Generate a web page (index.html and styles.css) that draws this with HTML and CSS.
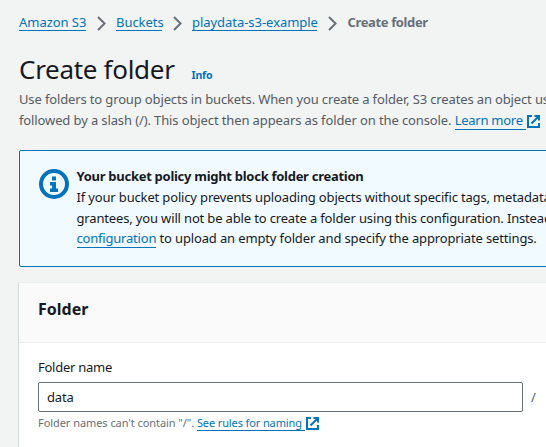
FILE: index.html
```html
<!DOCTYPE html>
<html lang="en">
<head>
<meta charset="utf-8">
<title>Create folder</title>
<link rel="stylesheet" href="styles.css">
</head>
<body>
<svg class="defs" width="0" height="0" aria-hidden="true">
  <symbol id="external" viewBox="0 0 13 13"><path d="M5 1H1V12H12V8M7.5 1H12V5.5M12 1L4.5 8.5" fill="none" stroke="currentColor" stroke-width="2"/></symbol>
  <symbol id="chevron" viewBox="0 0 9 15"><path d="M1 1L7.6 7.5L1 14" fill="none" stroke="currentColor" stroke-width="2"/></symbol>
</svg>
<main class="page">
  <nav class="crumbs">
    <a class="link c1">Amazon S3</a><svg class="chevron"><use href="#chevron"/></svg>
    <a class="link c2">Buckets</a><svg class="chevron"><use href="#chevron"/></svg>
    <a class="link c3">playdata-s3-example</a><svg class="chevron"><use href="#chevron"/></svg>
    <span class="current">Create folder</span>
  </nav>
  <header class="heading"><h1>Create folder</h1><a class="info">Info</a></header>
  <div class="intro">
    <p class="i1">Use folders to group objects in buckets. When you create a folder, S3 creates an object us</p>
    <p class="i2">followed by a slash (/). This object then appears as folder on the console. <a class="link learn">Learn more&nbsp;</a><svg class="external"><use href="#external"/></svg></p>
  </div>
  <section class="alert">
    <svg class="info-icon" viewBox="0 0 30 30"><circle cx="15" cy="15" r="13" fill="none" stroke="currentColor" stroke-width="4"/><path d="M13 7.500h4v4h-4zM11 13h6v6.500h2v3.500h-8v-3.500h2v-3h-2z" fill="currentColor"/></svg>
    <div class="alert-text">
      <h2>Your bucket policy might block folder creation</h2>
      <p class="a1">If your bucket policy prevents uploading objects without specific tags, metadata</p>
      <p class="a2">grantees, you will not be able to create a folder using this configuration. Instead</p>
      <p class="a3"><a class="link">configuration</a> to upload an empty folder and specify the appropriate settings.</p>
    </div>
  </section>
  <section class="card">
    <h2 class="card-head">Folder</h2>
    <div class="card-body">
      <label for="name">Folder name</label>
      <div class="field"><input id="name" value="data"><span class="slash">/</span></div>
      <p class="hint">Folder names can't contain "/". <a class="link rules">See rules for naming&nbsp;</a><svg class="external"><use href="#external"/></svg></p>
    </div>
  </section>
</main>
</body>
</html>
```
FILE: styles.css
```css
* { box-sizing: border-box; }
body { margin: 0; height: 447px; overflow: hidden; background: #f2f3f3; color: #16191f; font: 13px/21px "Noto Sans", sans-serif; }
h1, h2, p { margin: 0; }
p, h2 { white-space: nowrap; }
.defs { display: block; }
.page { display: flex; flex-direction: column; height: 447px; padding: 12px 0 0 19px; overflow: hidden; }
.link { color: #0073bb; border-bottom: 1px solid #0073bb; }
.crumbs { display: flex; height: 20px; white-space: nowrap; flex: none; }
.crumbs .link { height: 19px; line-height: 21px; flex: none; letter-spacing: -0.04px; }
.c1 { width: 67px; }
.c2 { width: 46px; }
.c3 { width: 125px; }
.chevron { width: 9px; height: 15px; margin: 4px 10px 0 11px; color: #687078; flex: none; }
.current { margin-left: 0.6px; color: #687078; font-weight: 700; line-height: 21px; letter-spacing: -0.38px; }
.heading { display: flex; align-items: baseline; margin-top: 19px; height: 38px; flex: none; }
h1 { font-size: 26px; font-weight: 400; line-height: 36px; letter-spacing: -0.3px; }
.info { color: #0073bb; font-size: 10.5px; font-weight: 700; margin-left: 17px; letter-spacing: -0.2px; }
.intro { color: #545b64; flex: none; }
.i1 { letter-spacing: -0.138px; }
.i2 { letter-spacing: -0.118px; }
.learn { letter-spacing: -0.26px; }
.intro .link, .alert .link { display: inline-block; line-height: 17px; }
.external { width: 13px; height: 13px; margin-left: 1px; vertical-align: -3px; color: #0073bb; }
.alert { display: flex; flex: none; height: 117px; margin: 19px -4px 0 0; padding: 15px 0 0 18px; border: 1px solid #0073bb; border-radius: 2px; background: #f1faff; }
.info-icon { width: 30px; height: 30px; margin: 3px 7.500px 0 1px; color: #0073bb; flex: none; }
.alert-text h2 { font-size: 13px; line-height: 21px; letter-spacing: -0.28px; }
.alert-text p { line-height: 20.6px; }
.a1 { letter-spacing: -0.155px; }
.a2 { letter-spacing: -0.155px; }
.a3 { letter-spacing: -0.14px; }
.a3 .link { letter-spacing: -0.2px; }
.card { flex: 1; margin: 15px -4px 0 -1px; border: 1px solid #eaeded; border-left-color: #d5dbdb; border-bottom: 0; background: #fff; }
.card-head { height: 60px; padding: 15px 19px; border-bottom: 1px solid #eaeded; background: #fafafa; font-size: 16px; line-height: 23px; }
.card-body { padding: 14px 0 0 19px; }
label { display: block; line-height: 21px; letter-spacing: -0.25px; }
.field { display: flex; align-items: center; margin-top: 4px; }
input { flex: none; width: 485px; height: 30px; padding: 0 8px; border: 1px solid #687078; border-radius: 2px; color: #16191f; font: inherit; letter-spacing: -0.2px; outline: 0; }
.slash { margin-left: 8px; color: #545b64; }
.hint { margin-top: 1px; color: #687078; font-size: 11px; line-height: 19px; letter-spacing: -0.06px; }
.hint .link { display: inline-block; line-height: 15px; letter-spacing: -0.12px; }
```
